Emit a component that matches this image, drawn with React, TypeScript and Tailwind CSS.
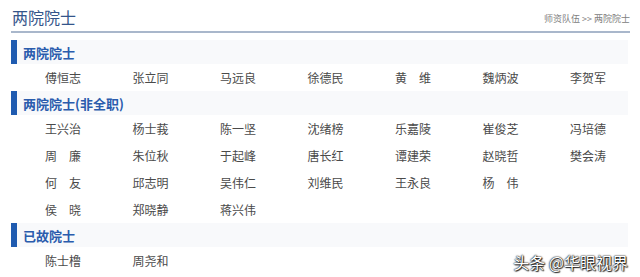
import React from 'react';

const sections = [
  {
    title: '两院院士',
    rows: [['傅恒志', '张立同', '马远良', '徐德民', '黄　维', '魏炳波', '李贺军']],
  },
  {
    title: '两院院士(非全职)',
    rows: [
      ['王兴治', '杨士莪', '陈一坚', '沈绪榜', '乐嘉陵', '崔俊芝', '冯培德'],
      ['周　廉', '朱位秋', '于起峰', '唐长红', '谭建荣', '赵晓哲', '樊会涛'],
      ['何　友', '邱志明', '吴伟仁', '刘维民', '王永良', '杨　伟'],
      ['侯　晓', '郑晓静', '蒋兴伟'],
    ],
  },
  {
    title: '已故院士',
    rows: [['陈士橹', '周尧和']],
  },
];

export default function App() {
  return (
    <div
      className="relative w-[640px] h-[277px] overflow-hidden bg-white"
      style={{ fontFamily: '"Microsoft YaHei", "Noto Sans CJK SC", "Noto Sans", sans-serif' }}
    >
      <div className="pl-[11px] pr-[10px]">
        {/* HEADER */}
        <div className="flex items-end justify-between h-[33px] border-b-2 border-[#a9b7cb] pb-[4px]">
          <h1 className="pl-[1px] text-[16px] leading-[20px] text-[#34558a]">两院院士</h1>
          <span className="text-[9px] leading-[12px] text-[#808080] mb-[2px]">师资队伍 &gt;&gt; 两院院士</span>
        </div>

        <div className="pt-[7px] pr-[2px]">
          {sections.map((sec) => (
            <div key={sec.title}>
              <div className="flex items-center h-[24px] bg-[#f8f9fb]">
                <span className="w-[6px] h-full bg-[#1f5bb0]" />
                <span className="ml-[6px] text-[13px] font-bold text-[#2a5cad] leading-none">{sec.title}</span>
              </div>
              {sec.rows.map((row, r) => (
                <div key={r} className="grid grid-cols-[repeat(7,87.5px)] pl-[34px]">
                  {row.map((n) => (
                    <div key={n} className="h-[27px] flex items-center text-[12px] text-[#4a4a4a] whitespace-pre">
                      {n}
                    </div>
                  ))}
                </div>
              ))}
            </div>
          ))}
        </div>
      </div>

      {/* WATERMARK */}
      <div className="absolute right-[12px] bottom-[5px] text-[16px] leading-[20px] text-white [text-shadow:0_0_1px_#000,0_0_2px_#000,1px_1px_1px_#333]">
        头条 @华眼视界
      </div>
    </div>
  );
}
